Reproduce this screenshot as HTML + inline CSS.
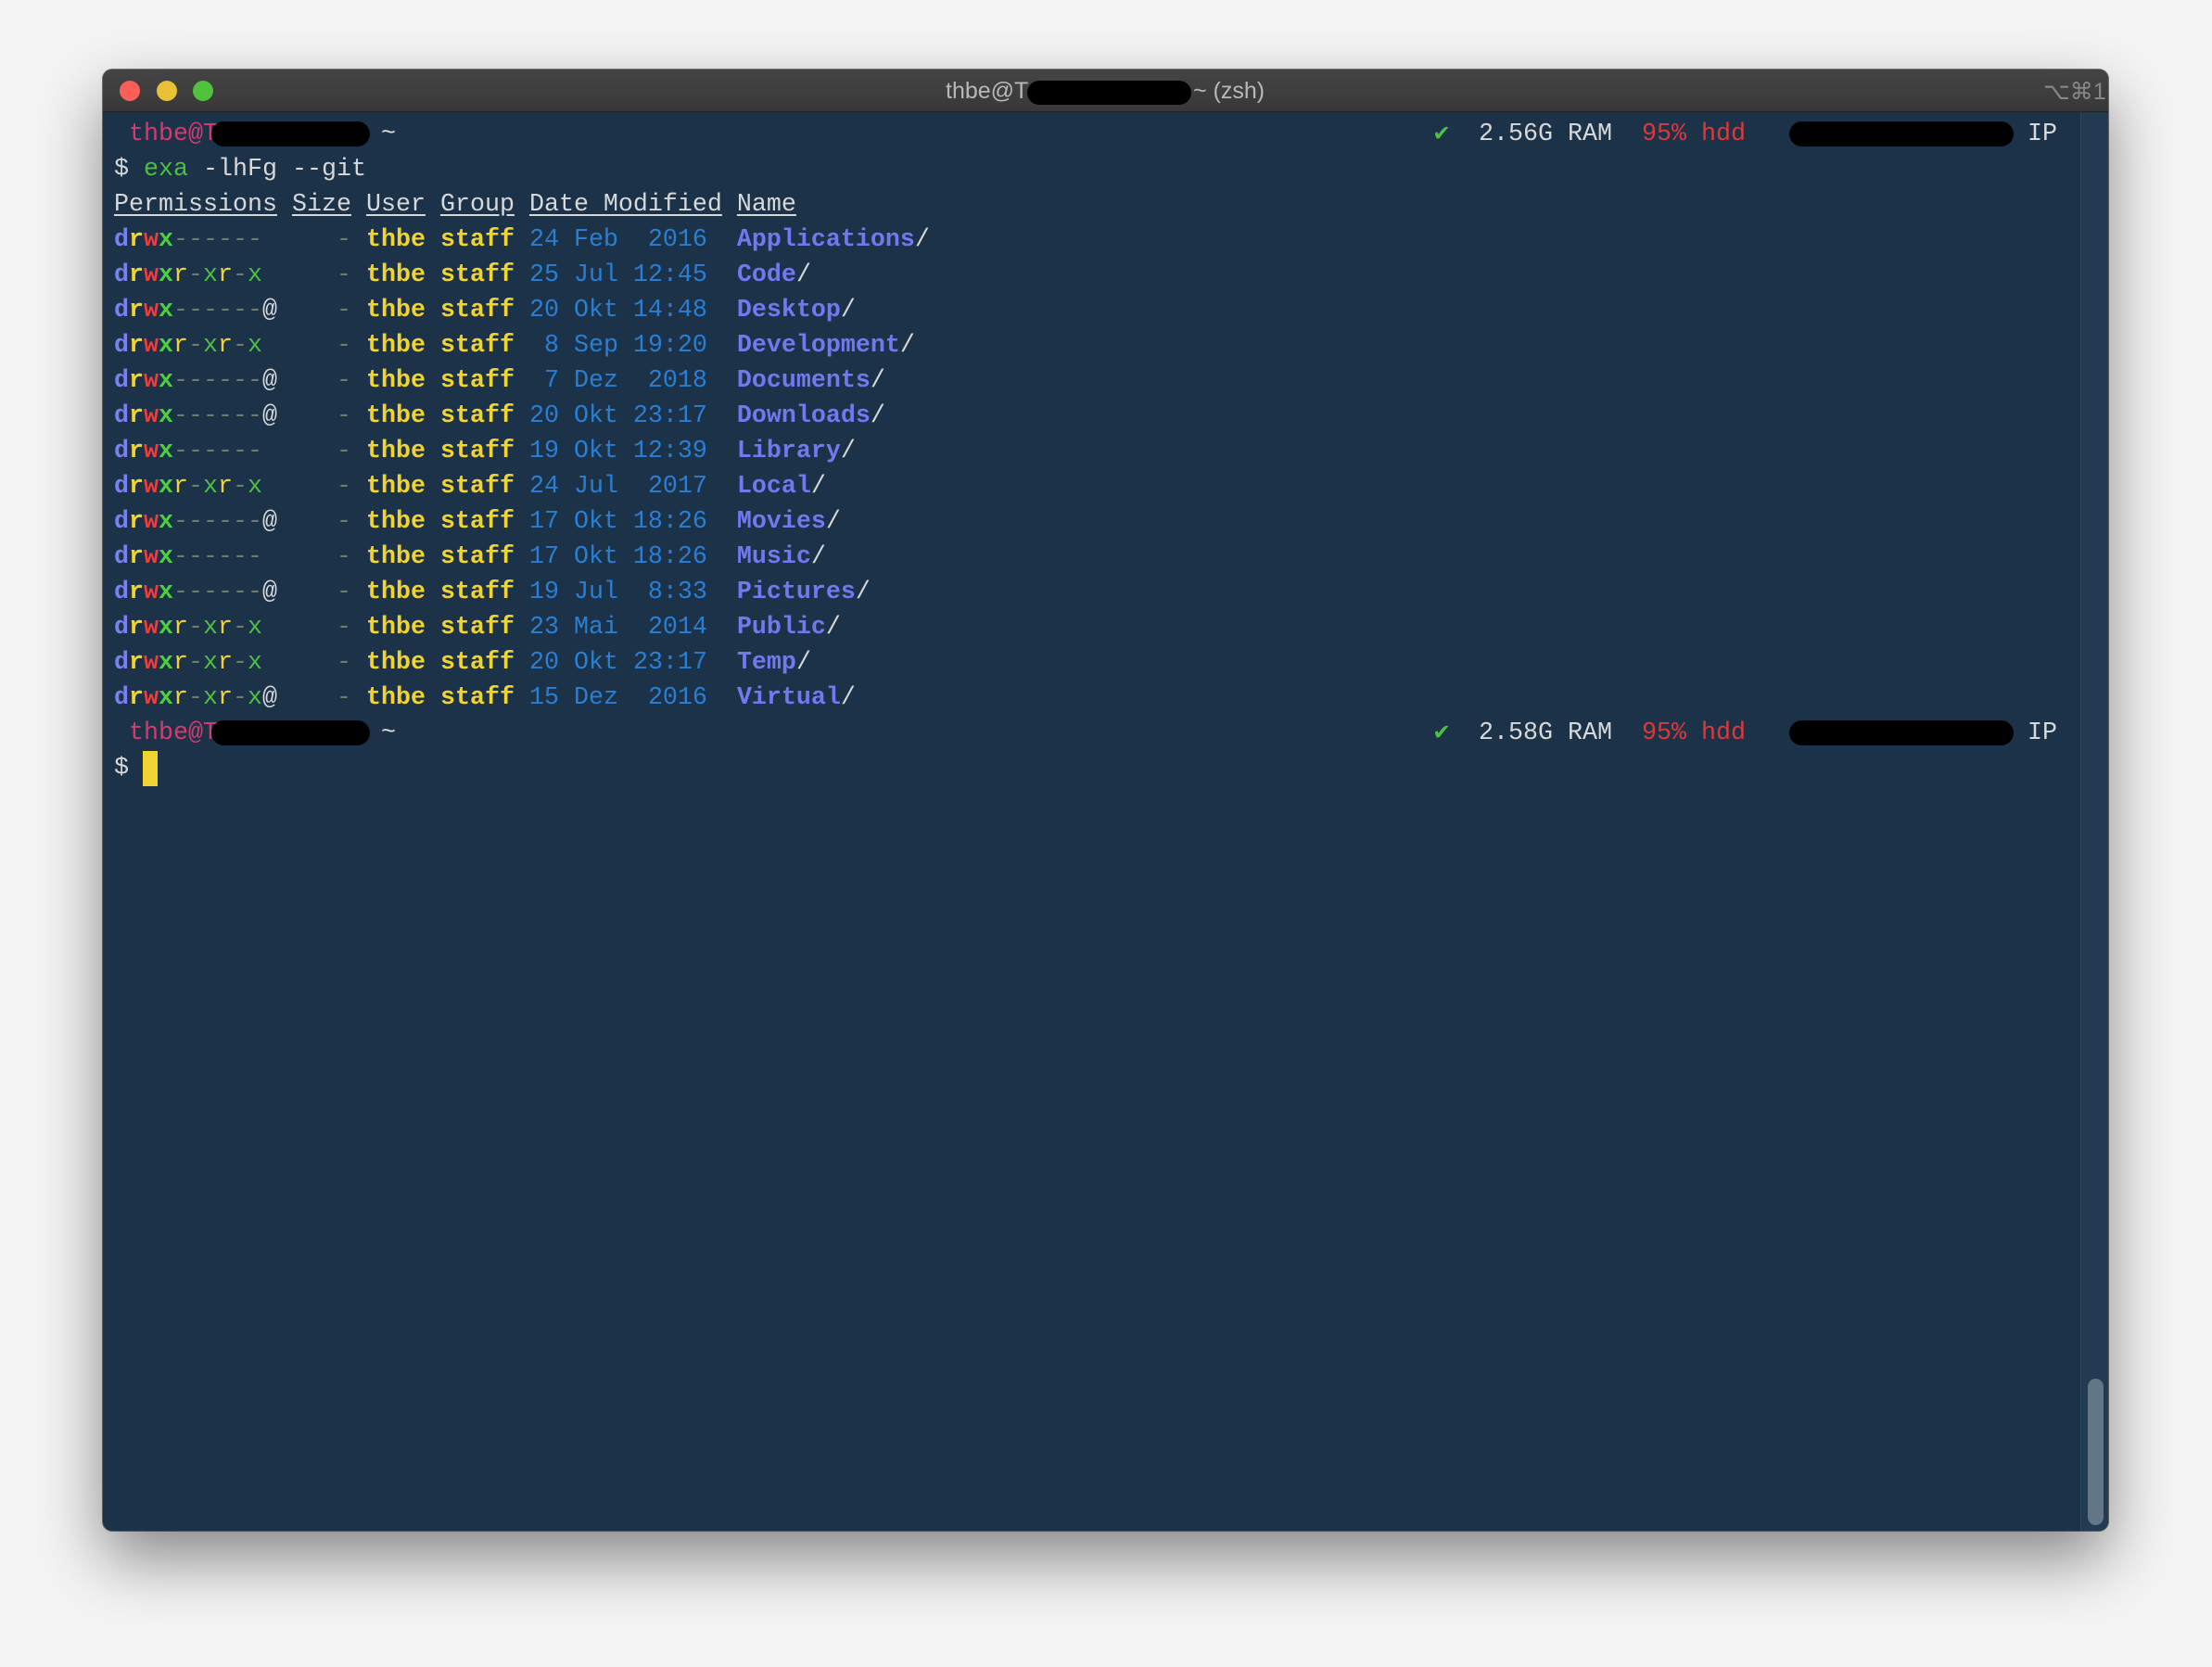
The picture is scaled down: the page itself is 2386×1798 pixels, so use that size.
<!DOCTYPE html>
<html><head><meta charset="utf-8"><style>
html,body{margin:0;padding:0}
body{width:2386px;height:1798px;background:#f4f4f4;position:relative;overflow:hidden;font-family:"Liberation Mono",monospace}
#win{position:absolute;left:111px;top:75px;width:2163px;height:1576px;border-radius:10px;overflow:hidden;background:#1b3249;box-shadow:0 30px 70px rgba(0,0,0,.45),0 0 0 1px rgba(0,0,0,.5)}
#tb{position:absolute;left:0;top:0;width:100%;height:45px;background:linear-gradient(#444,#383838);border-bottom:1px solid #222}
.tl{position:absolute;top:12px;width:22px;height:22px;border-radius:50%}
.title{position:absolute;top:9px;font-family:"Liberation Sans",sans-serif;font-size:25px;color:#b8b8b8}
.pill{position:absolute;background:#000;border-radius:14px}
#gut{position:absolute;left:2133px;top:46px;width:30px;bottom:0;background:#223a52;border-left:1px solid #2c465e}
#thumb{position:absolute;left:2141px;top:1412px;width:17px;height:158px;border-radius:9px;background:#627686}
.l{position:absolute;left:12px;font-size:26.67px;line-height:38px;height:38px;white-space:pre;color:#d8d8d8}
.d{color:#7a7ff2;font-weight:bold}.r{color:#f2d431;font-weight:bold}.w{color:#f03c3c;font-weight:bold}.x{color:#4cd040;font-weight:bold}
.g{color:#4cc040}.rr{color:#f2d431}.m{color:#6c7c70}.y{color:#f2d431;font-weight:bold}.b{color:#2a7fd4}.n{color:#7278f0;font-weight:bold}
.u{text-decoration:underline;text-underline-offset:4px}
.p{color:#d63a6e}.red{color:#e03838}
</style></head><body>
<div id="win">
<div id="tb">
<div class="tl" style="left:18px;background:#fc5f57"></div>
<div class="tl" style="left:58px;background:#e8bf35"></div>
<div class="tl" style="left:97px;background:#4fc33c"></div>
<div class="title" style="left:909px">thbe@T</div>
<div class="pill" style="left:997px;top:12px;width:177px;height:26px"></div>
<div class="title" style="left:1176px">~ (zsh)</div>
<div class="title" style="left:2093px;color:#888">⌥⌘1</div>
</div>
<div id="gut"></div><div id="thumb"></div>
<div class="l" style="top:51px"> <span class="p">thbe@T</span>           <span>~</span></div>
<div class="pill" style="left:117px;top:56px;width:171px;height:27px"></div>
<div class="l" style="top:51px;left:1436px"><span class="g">✔</span>  2.56G RAM  <span class="red">95% hdd</span></div>
<div class="pill" style="left:1819px;top:56px;width:242px;height:27px"></div>
<div class="l" style="top:51px;left:2076px">IP</div>
<div class="l" style="top:89px">$ <span class="g">exa</span> -lhFg --git</div>
<div class="l" style="top:127px"><span class="u">Permissions</span> <span class="u">Size</span> <span class="u">User</span> <span class="u">Group</span> <span class="u">Date Modified</span> <span class="u">Name</span></div>
<div class="l" style="top:165px"><span class="d">d</span><span class="r">r</span><span class="w">w</span><span class="x">x</span><span class="m">------</span>     <span class="m">-</span> <span class="y">thbe</span> <span class="y">staff</span> <span class="b">24 Feb  2016</span>  <span class="n">Applications</span>/</div>
<div class="l" style="top:203px"><span class="d">d</span><span class="r">r</span><span class="w">w</span><span class="x">x</span><span class="rr">r</span><span class="m">-</span><span class="g">x</span><span class="rr">r</span><span class="m">-</span><span class="g">x</span>     <span class="m">-</span> <span class="y">thbe</span> <span class="y">staff</span> <span class="b">25 Jul 12:45</span>  <span class="n">Code</span>/</div>
<div class="l" style="top:241px"><span class="d">d</span><span class="r">r</span><span class="w">w</span><span class="x">x</span><span class="m">------</span>@    <span class="m">-</span> <span class="y">thbe</span> <span class="y">staff</span> <span class="b">20 Okt 14:48</span>  <span class="n">Desktop</span>/</div>
<div class="l" style="top:279px"><span class="d">d</span><span class="r">r</span><span class="w">w</span><span class="x">x</span><span class="rr">r</span><span class="m">-</span><span class="g">x</span><span class="rr">r</span><span class="m">-</span><span class="g">x</span>     <span class="m">-</span> <span class="y">thbe</span> <span class="y">staff</span> <span class="b"> 8 Sep 19:20</span>  <span class="n">Development</span>/</div>
<div class="l" style="top:317px"><span class="d">d</span><span class="r">r</span><span class="w">w</span><span class="x">x</span><span class="m">------</span>@    <span class="m">-</span> <span class="y">thbe</span> <span class="y">staff</span> <span class="b"> 7 Dez  2018</span>  <span class="n">Documents</span>/</div>
<div class="l" style="top:355px"><span class="d">d</span><span class="r">r</span><span class="w">w</span><span class="x">x</span><span class="m">------</span>@    <span class="m">-</span> <span class="y">thbe</span> <span class="y">staff</span> <span class="b">20 Okt 23:17</span>  <span class="n">Downloads</span>/</div>
<div class="l" style="top:393px"><span class="d">d</span><span class="r">r</span><span class="w">w</span><span class="x">x</span><span class="m">------</span>     <span class="m">-</span> <span class="y">thbe</span> <span class="y">staff</span> <span class="b">19 Okt 12:39</span>  <span class="n">Library</span>/</div>
<div class="l" style="top:431px"><span class="d">d</span><span class="r">r</span><span class="w">w</span><span class="x">x</span><span class="rr">r</span><span class="m">-</span><span class="g">x</span><span class="rr">r</span><span class="m">-</span><span class="g">x</span>     <span class="m">-</span> <span class="y">thbe</span> <span class="y">staff</span> <span class="b">24 Jul  2017</span>  <span class="n">Local</span>/</div>
<div class="l" style="top:469px"><span class="d">d</span><span class="r">r</span><span class="w">w</span><span class="x">x</span><span class="m">------</span>@    <span class="m">-</span> <span class="y">thbe</span> <span class="y">staff</span> <span class="b">17 Okt 18:26</span>  <span class="n">Movies</span>/</div>
<div class="l" style="top:507px"><span class="d">d</span><span class="r">r</span><span class="w">w</span><span class="x">x</span><span class="m">------</span>     <span class="m">-</span> <span class="y">thbe</span> <span class="y">staff</span> <span class="b">17 Okt 18:26</span>  <span class="n">Music</span>/</div>
<div class="l" style="top:545px"><span class="d">d</span><span class="r">r</span><span class="w">w</span><span class="x">x</span><span class="m">------</span>@    <span class="m">-</span> <span class="y">thbe</span> <span class="y">staff</span> <span class="b">19 Jul  8:33</span>  <span class="n">Pictures</span>/</div>
<div class="l" style="top:583px"><span class="d">d</span><span class="r">r</span><span class="w">w</span><span class="x">x</span><span class="rr">r</span><span class="m">-</span><span class="g">x</span><span class="rr">r</span><span class="m">-</span><span class="g">x</span>     <span class="m">-</span> <span class="y">thbe</span> <span class="y">staff</span> <span class="b">23 Mai  2014</span>  <span class="n">Public</span>/</div>
<div class="l" style="top:621px"><span class="d">d</span><span class="r">r</span><span class="w">w</span><span class="x">x</span><span class="rr">r</span><span class="m">-</span><span class="g">x</span><span class="rr">r</span><span class="m">-</span><span class="g">x</span>     <span class="m">-</span> <span class="y">thbe</span> <span class="y">staff</span> <span class="b">20 Okt 23:17</span>  <span class="n">Temp</span>/</div>
<div class="l" style="top:659px"><span class="d">d</span><span class="r">r</span><span class="w">w</span><span class="x">x</span><span class="rr">r</span><span class="m">-</span><span class="g">x</span><span class="rr">r</span><span class="m">-</span><span class="g">x</span>@    <span class="m">-</span> <span class="y">thbe</span> <span class="y">staff</span> <span class="b">15 Dez  2016</span>  <span class="n">Virtual</span>/</div>
<div class="l" style="top:697px"> <span class="p">thbe@T</span>           <span>~</span></div>
<div class="pill" style="left:117px;top:702px;width:171px;height:27px"></div>
<div class="l" style="top:697px;left:1436px"><span class="g">✔</span>  2.58G RAM  <span class="red">95% hdd</span></div>
<div class="pill" style="left:1819px;top:702px;width:242px;height:27px"></div>
<div class="l" style="top:697px;left:2076px">IP</div>
<div class="l" style="top:735px">$</div>
<div style="position:absolute;left:43px;top:735px;width:16px;height:38px;background:#f2d431"></div>
</div>
</body></html>
